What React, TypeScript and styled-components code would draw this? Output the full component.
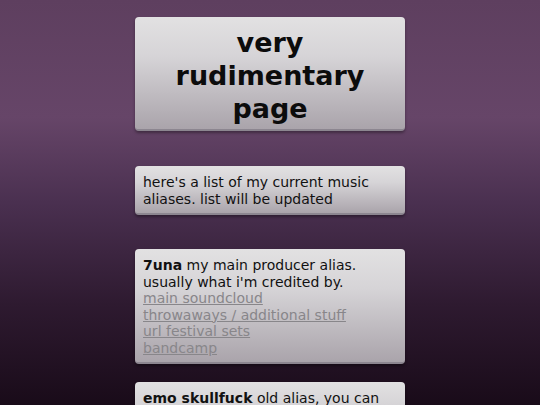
import React from 'react';
import styled, { createGlobalStyle } from 'styled-components';

const GlobalStyle = createGlobalStyle`
  html, body {
    margin: 0;
    padding: 0;
    height: 100%;
  }

  body {
    min-height: 405px;
    background: linear-gradient(
      to bottom,
      #5e3f5f 0%,
      #664568 29%,
      #4a3050 50%,
      #2e1a30 75%,
      #190b19 100%
    );
    background-attachment: fixed;
    font-family: "DejaVu Sans", Verdana, sans-serif;
    color: #111;
  }
`;

const Column = styled.main`
  width: 270px;
  margin: 0 auto;
  padding-top: 17px;
  display: flex;
  flex-direction: column;
`;

const Box = styled.section<{ $below?: number }>`
  box-sizing: border-box;
  width: 100%;
  margin-bottom: ${p => (p.$below ?? 35)}px;
  padding: 8px 8px 6px;
  border-radius: 4px;
  background: linear-gradient(to bottom, #e2e1e2 0%, #d6d4d7 35%, #aaa4ab 100%);
  border-bottom: 2px solid #8c8690;
  box-shadow: 0 2px 3px rgba(0, 0, 0, 0.35);
  font-size: 14px;
  line-height: 16.5px;
`;

const Title = styled.h1`
  margin: 1px 0 -2px;
  text-align: center;
  font-size: 27px;
  line-height: 33px;
  font-weight: bold;
  color: #0c0c0c;
`;

const Alias = styled.b`
  font-weight: bold;
`;

const LinkList = styled.div`
  display: flex;
  flex-direction: column;
`;

const Link = styled.a`
  color: #88868a;
  text-decoration: underline;
  align-self: flex-start;
`;

const aliases = [
  {
    name: '7una',
    note: "my main producer alias. usually what i'm credited by.",
    links: ['main soundcloud', 'throwaways / additional stuff', 'url festival sets', 'bandcamp'],
  },
  {
    name: 'emo skullfuck',
    note: 'old alias, you can find some older stuff here.',
    links: ['soundcloud'],
  },
];

export default function App() {
  return (
    <>
      <GlobalStyle />
      <Column>
        <Box $below={35}>
          <Title>very rudimentary page</Title>
        </Box>
        <Box $below={34}>
          here's a list of my current music aliases. list will be updated
        </Box>
        {aliases.map(a => (
          <Box key={a.name} $below={18}>
            <Alias>{a.name}</Alias> {a.note}
            <LinkList>
              {a.links.map(l => (
                <Link key={l} href="#">{l}</Link>
              ))}
            </LinkList>
          </Box>
        ))}
      </Column>
    </>
  );
}
